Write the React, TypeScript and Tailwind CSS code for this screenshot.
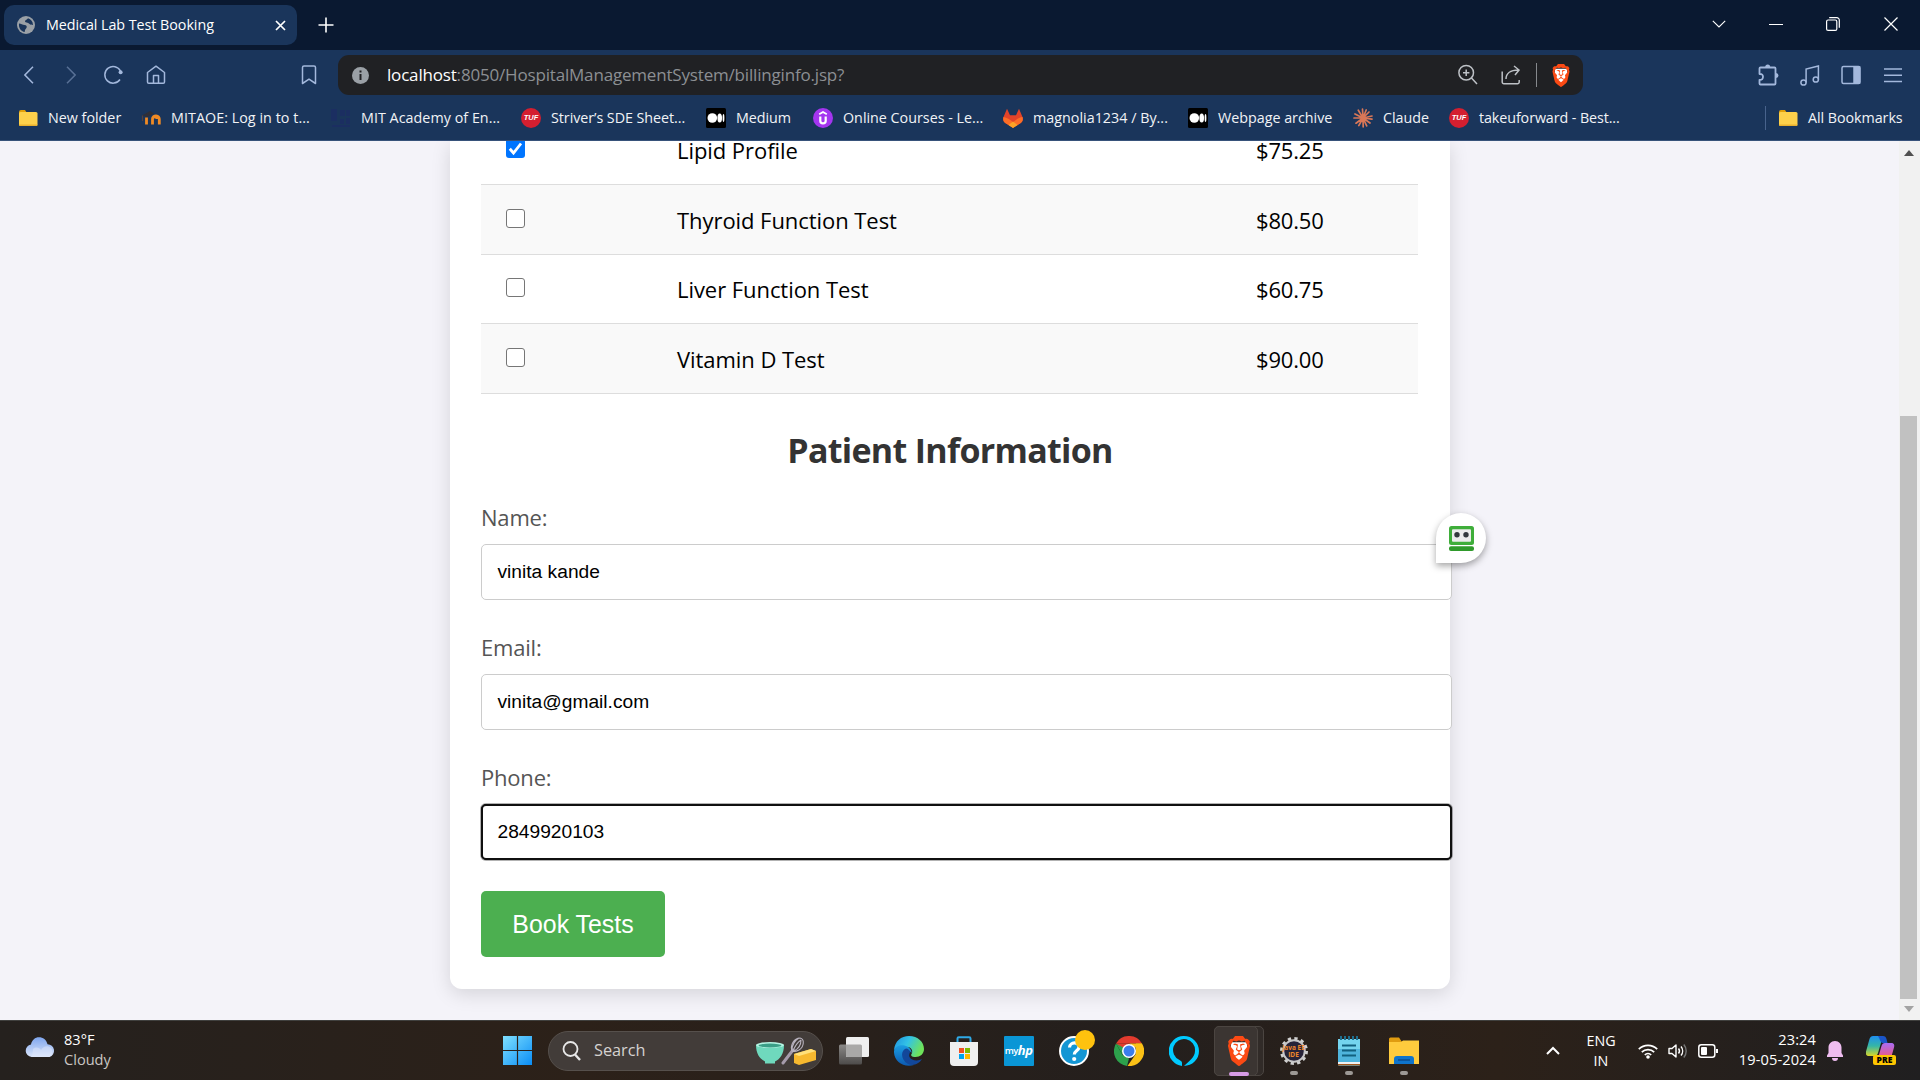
import React from "react";
import { SiBrave } from "react-icons/si";

const UI = "font-['Open_Sans','Noto_Sans',sans-serif]";
const ARIAL = "font-['Liberation_Sans',Arial,sans-serif]";

/* ---------- shared logos ---------- */

function BraveLogo({ className }: { className: string }) {
  return (
    <span className={"relative block " + className}>
      <svg viewBox="0 0 24 24" preserveAspectRatio="none" className="absolute inset-0 size-full">
        <path d="M5 5h14l1 6-3 8-5 3-5-3-3-8z" fill="#fff" />
      </svg>
      <SiBrave className="absolute inset-0 size-full text-[#fb4a14]" preserveAspectRatio="none" />
    </span>
  );
}

function FolderIcon() {
  return (
    <svg viewBox="0 0 20 18" className="h-[18px] w-5">
      <path d="M1 3a2 2 0 0 1 2-2h4l2 3v4H1z" fill="#e3a008" />
      <rect x="1" y="3" width="18.500" height="14" rx="1.500" fill="#fdd04b" />
      <path d="M1 15.500h18.500a1.500 1.500 0 0 1-1.500 1.500h-15.500a1.500 1.500 0 0 1-1.500-1.500z" fill="#e9b02e" />
    </svg>
  );
}

function MoodleIcon() {
  return (
    <svg viewBox="0 0 20 20" className="size-5" fill="none">
      <path d="M5.500 16.500V9.500M11.500 16.500v-5.300a2.300 2.300 0 0 1 4.600-.2 M18.300 16.500v-5a3.300 3.300 0 0 0-6.800-.5v5.500" stroke="#f08a24" strokeWidth="2.800" />
      <path d="M1 7.500 9 3l4 2.500-6.500 3.500z" fill="#2f2f38" />
      <path d="M1.500 7.500v5.500" stroke="#55423c" strokeWidth="1.200" />
    </svg>
  );
}

function MitIcon() {
  return (
    <svg viewBox="0 0 20 20" className="size-5">
      <path d="M0 1h6v12H0zM9 2h5v6H9zM15 2h4v6h-4zM9 11h4v5H9zM15 10h4v6h-4zM1 17h18v2H1z" fill="#1b2b66" opacity=".65" />
    </svg>
  );
}

function TufIcon() {
  return (
    <span className={"flex size-5 items-center justify-center rounded-full bg-[#d41f30] text-[7.5px] font-black italic leading-none text-white " + ARIAL}>
      TUF
    </span>
  );
}

function MediumIcon() {
  return (
    <svg viewBox="0 0 20 20" className="size-5">
      <rect width="20" height="20" rx="1.500" fill="#000" />
      <circle cx="6.300" cy="10" r="4.800" fill="#fff" />
      <ellipse cx="13.700" cy="10" rx="2.300" ry="4.500" fill="#fff" />
      <ellipse cx="17.500" cy="10" rx=".9" ry="4" fill="#fff" />
    </svg>
  );
}

function UdemyIcon() {
  return (
    <svg viewBox="0 0 20 20" className="size-5" fill="none">
      <circle cx="10" cy="10" r="10" fill="#a435f0" />
      <path d="M6.200 6.200 10 4l3.800 2.200" stroke="#fff" strokeWidth="1.800" />
      <path d="M7.300 8.500v4.200a2.700 2.700 0 0 0 5.400 0V8.500" stroke="#fff" strokeWidth="2.200" />
    </svg>
  );
}

function GitlabIcon() {
  return (
    <svg viewBox="0 0 20 20" className="size-5">
      <path d="M4 .8 7 7.300h6L16 .8l3.600 8.400c.7 2.400 0 4.300-1.800 5.700L10 19.800 2.200 14.900C.4 13.500-.3 11.600.4 9.200z" fill="#e24329" />
      <path d="M.5 9c3.500.5 6.500 2.500 9.500 5.200C13 11.500 16 9.500 19.500 9c.8 2.500 0 4.500-1.700 5.900L10 19.800 2.200 14.900C.5 13.500-.3 11.500.5 9z" fill="#fc6d26" />
      <path d="m5.500 16.900 4.500-3.400 4.500 3.400-4.500 3z" fill="#fca326" />
    </svg>
  );
}

function ClaudeIcon() {
  return (
    <svg viewBox="0 0 20 20" className="size-5" stroke="#d97757" strokeWidth="1.700" strokeLinecap="round">
      <path d="M10 10 9.500 1.200M10 10l3.200-8M10 10l6-6M10 10l9-2M10 10l9 1.200M10 10l7 5M10 10l3.700 7.800M10 10l.2 9M10 10l-4.200 7.600M10 10l-7 5.200M10 10H1M10 10 2 6M10 10 5.300 2.200" />
    </svg>
  );
}

/* ---------- browser chrome ---------- */

function TabStrip() {
  return (
    <div className="flex h-[50px] items-center bg-[#0a1931] text-white">
      <div className="ml-1 flex h-10 w-[293px] items-center rounded-[10px] bg-[#1a355b] pl-[13px] pr-[11px]">
        <svg viewBox="0 0 18 18" className="size-[18px]">
          <circle cx="9" cy="9" r="9" fill="#9aa0a6" />
          <path d="M2 7.500c2 .2 3.500 1.500 5.500 1.500 1.800.2 2.500 1 2.200 2.300-.5 1.700-1.700 1.500-2 4.700C4 15.500 1.500 12 2 7.500zM11 2.300c-.5 1.500-2.700 1.200-3 3 0 1.200 1.300 1.200 2.500 1.500 1.700.4 1.700 2.200 5.500 2.200-.1-3.500-2-5.800-5-6.700z" fill="#1a355b" />
        </svg>
        <span className="-mt-px ml-[11px] whitespace-nowrap text-[14.300px] tracking-[-0.04px]">Medical Lab Test Booking</span>
        <svg viewBox="0 0 11 11" className="ml-auto size-[11px]" stroke="#fff" strokeWidth="1.700">
          <path d="M1 1l9 9M10 1l-9 9" />
        </svg>
      </div>
      <svg viewBox="0 0 16 16" className="ml-[21px] size-4" stroke="#fff" strokeWidth="1.600">
        <path d="M8 .5v15M.5 8h15" />
      </svg>
      <div className="ml-auto flex items-center pb-[2px] pr-[22px]">
        <svg viewBox="0 0 14 8" className="h-2 w-[14px]" fill="none" stroke="#fff" strokeWidth="1.100">
          <path d="M.8.800 7 7l6.200-6.200" />
        </svg>
        <div className="ml-[43px] h-px w-[14px] bg-white" />
        <svg viewBox="0 0 14 14" className="ml-[43px] size-[14px]" fill="none" stroke="#fff" strokeWidth="1.200">
          <rect x=".6" y="3" width="10.200" height="10.400" rx="1.500" />
          <path d="M3.200.700h7.500a2.500 2.500 0 0 1 2.600 2.500v7.500" />
        </svg>
        <svg viewBox="0 0 14 14" className="ml-11 size-[14px]" stroke="#fff" strokeWidth="1.200">
          <path d="M.5.500l13 13M13.500.500l-13 13" />
        </svg>
      </div>
    </div>
  );
}

function AddressRow() {
  return (
    <div className="flex h-[50px] items-center text-[#a3b8dc]">
      <svg viewBox="0 0 10 18" className="ml-6 h-[18px] w-[10px]" fill="none" stroke="currentColor" strokeWidth="1.500">
        <path d="M9 .8.900 9 9 17.200" />
      </svg>
      <svg viewBox="0 0 10 18" className="ml-[32px] h-[18px] w-[10px] opacity-45" fill="none" stroke="currentColor" strokeWidth="1.500">
        <path d="M1 .8 9.100 9 1 17.200" />
      </svg>
      <svg viewBox="0 0 20 20" className="ml-[27px] size-5" fill="none" stroke="currentColor" strokeWidth="1.500">
        <path d="M17.500 6A8.300 8.300 0 1 0 17 14.500" />
        <circle cx="17.600" cy="7.300" r="2" fill="currentColor" stroke="none" />
      </svg>
      <svg viewBox="0 0 20 20" className="ml-[23px] size-5" fill="none" stroke="currentColor" strokeWidth="1.500" strokeLinejoin="round">
        <path d="M1.500 7.500 10 1.200l8.500 6.300V17a1.300 1.300 0 0 1-1.300 1.300H2.800A1.300 1.300 0 0 1 1.500 17z" />
        <path d="M7.500 18v-7.500h5V18" />
      </svg>
      <svg viewBox="0 0 16 20" className="ml-[135px] h-5 w-4" fill="none" stroke="currentColor" strokeWidth="1.500" strokeLinejoin="round">
        <path d="M1.500 2.500a1.500 1.500 0 0 1 1.500-1.500h10A1.500 1.500 0 0 1 14.500 2.500v16L8 14.200 1.500 18.500z" />
      </svg>
      <div className="ml-[21px] flex h-10 w-[1245px] items-center rounded-[11px] bg-[#202124] pl-[14px] pr-3 text-[#bdc1c6]">
        <svg viewBox="0 0 17 17" className="size-[17px]">
          <circle cx="8.500" cy="8.500" r="8.500" fill="#9aa0a6" />
          <path d="M8.500 3.500v2M8.500 7v6" stroke="#202124" strokeWidth="2" />
        </svg>
        <span className="-mt-px ml-[18px] whitespace-nowrap text-[17px] tracking-[-0.18px] text-[#8c8f93]">
          <span className="text-white">localhost</span>:8050/HospitalManagementSystem/billinginfo.jsp?
        </span>
        <svg viewBox="0 0 20 22" className="ml-auto h-[22px] w-5" fill="none" stroke="currentColor" strokeWidth="1.500">
          <circle cx="8.200" cy="8.700" r="7.300" />
          <path d="M13.500 14l5.500 6M8.200 5.500v6.400M5 8.700h6.400" />
        </svg>
        <svg viewBox="0 0 20 20" className="ml-[23px] size-5" fill="none" stroke="currentColor" strokeWidth="1.500">
          <path d="M1.200 6.500V17a1.700 1.700 0 0 0 1.700 1.700h13.500A1.700 1.700 0 0 0 18.200 17v-2" />
          <path d="M5 14c0-5 4-9 12.500-9M13 1l5 4-4 5" />
        </svg>
        <div className="ml-[15px] h-6 w-px bg-[#86898d]" />
        <BraveLogo className="ml-[14px] h-[23px] w-5" />
      </div>
      <div className="ml-auto flex items-center pr-[18px]">
        <svg viewBox="0 0 22 22" className="size-[22px]" fill="none" stroke="currentColor" strokeWidth="1.800" strokeLinejoin="round">
          <path d="M3.500 3.500h14a1 1 0 0 1 1 1v15a1 1 0 0 1-1 1h-14a1 1 0 0 1-1-1v-3.700c2.700.2 3.500-1.300 3.500-3s-1-3-3.500-2.800V4.500a1 1 0 0 1 1-1z" />
          <path d="M8.200 3a2.500 2.500 0 0 1 5 0zM19 9a2.500 2.500 0 0 1 0 5z" fill="currentColor" stroke="none" />
        </svg>
        <svg viewBox="0 0 20 22" className="ml-[21px] h-[22px] w-5" fill="none" stroke="currentColor" strokeWidth="1.500">
          <circle cx="3.500" cy="18.500" r="2.600" />
          <circle cx="15.800" cy="15.500" r="2.600" />
          <path d="M6.100 18.500V5L18.400 2v13.500" />
        </svg>
        <svg viewBox="0 0 20 20" className="ml-[21px] size-5" fill="none" stroke="currentColor" strokeWidth="1.500">
          <rect x="1" y="1.500" width="18" height="17" rx="1.500" />
          <path d="M13 2h5.500v16H13z" fill="currentColor" />
        </svg>
        <svg viewBox="0 0 18 16" className="ml-[23px] h-4 w-[18px]" stroke="currentColor" strokeWidth="1.500">
          <path d="M0 2h18M0 8.300h18M0 14.600h18" />
        </svg>
      </div>
    </div>
  );
}

function Bookmark({ icon, label, w, track = "" }: { icon: React.ReactNode; label: string; w: string; track?: string }) {
  return (
    <div className={"flex shrink-0 items-center " + w}>
      {icon}
      <span className={"ml-[10px] whitespace-nowrap text-[14.300px] text-[#f1f3f6] " + track}>{label}</span>
    </div>
  );
}

function BookmarkBar() {
  return (
    <div className="flex h-[41px] items-center border-b border-[#37527a] pb-[5px] pl-[18px]">
      <Bookmark icon={<FolderIcon />} label="New folder" w="w-[123px]" />
      <Bookmark icon={<MoodleIcon />} label="MITAOE: Log in to t..." w="w-[190px]" track="tracking-[0.05px]" />
      <Bookmark icon={<MitIcon />} label="MIT Academy of En..." w="w-[190px]" track="tracking-[0.04px]" />
      <Bookmark icon={<TufIcon />} label="Striver’s SDE Sheet..." w="w-[185px]" track="tracking-[-0.05px]" />
      <Bookmark icon={<MediumIcon />} label="Medium" w="w-[107px]" track="tracking-[-0.05px]" />
      <Bookmark icon={<UdemyIcon />} label="Online Courses - Le..." w="w-[190px]" />
      <Bookmark icon={<GitlabIcon />} label="magnolia1234 / By..." w="w-[185px]" track="tracking-[0.02px]" />
      <Bookmark icon={<MediumIcon />} label="Webpage archive" w="w-[165px]" />
      <Bookmark icon={<ClaudeIcon />} label="Claude" w="w-[96px]" />
      <Bookmark icon={<TufIcon />} label="takeuforward - Best..." w="w-[200px]" track="tracking-[-0.09px]" />
      <div className="ml-auto h-6 w-px bg-[#48638c]" />
      <div className="ml-3">
        <Bookmark icon={<FolderIcon />} label="All Bookmarks" w="w-[142px]" track="tracking-[-0.05px]" />
      </div>
    </div>
  );
}

/* ---------- booking page ---------- */

const TESTS = [
  { name: "Lipid Profile", price: "$75.25", checked: true, row: "h-[70px]", box: "-mt-[2px]" },
  { name: "Thyroid Function Test", price: "$80.50", checked: false, row: "h-[70px] bg-[#f9f9f9]", box: "-mt-[2px]" },
  { name: "Liver Function Test", price: "$60.75", checked: false, row: "h-[69px]", box: "-mt-[4px]" },
  { name: "Vitamin D Test", price: "$90.00", checked: false, row: "h-[70px] bg-[#f9f9f9]", box: "-mt-[2px]" },
];

function CheckBox({ checked }: { checked: boolean }) {
  return checked ? (
    <svg viewBox="0 0 19 19" className="size-[19px]">
      <rect width="19" height="19" rx="3" fill="#0075ff" />
      <path d="M3.800 9.800 7.500 14 15 4.500" fill="none" stroke="#fff" strokeWidth="2.800" />
    </svg>
  ) : (
    <div className="size-[19px] rounded-[3px] border border-[#767676] bg-white" />
  );
}

function Field({ label, value, focused }: { label: string; value: string; focused?: boolean }) {
  return (
    <div className="h-[130px]">
      <div className={"h-[39px] text-[22px] leading-[24px] tracking-[-0.2px] text-[#555] " + UI}>{label}</div>
      <div className={"flex h-[56px] w-[971px] items-center rounded-[5px] border bg-white pl-[15.5px] text-[19.2px] text-black " + ARIAL + (focused ? " border-[#101010] outline-2 -outline-offset-2 outline-[#101010] shadow-[0_0_0_1px_rgba(0,0,0,0.3)]" : " border-[#ccc]")}>
        {value}
      </div>
    </div>
  );
}

function BookingPage() {
  return (
    <div className="relative flex h-[879px] overflow-hidden bg-[#f4f3f9]">
      <div className={"ml-[450px] h-[848px] w-[1000px] rounded-b-[12px] bg-white px-[31px] shadow-[0_5px_19px_rgba(0,0,0,0.13)] " + UI}>
        <div className="-mt-[26px] w-[937px]">
          {TESTS.map((t) => (
            <div key={t.name} className={"flex items-center border-b border-[#ddd] text-[22px] leading-[22px] text-black " + t.row}>
              <div className={"ml-[25px] w-[171px] " + t.box}><CheckBox checked={t.checked} /></div>
              <span className="w-[579px] tracking-[-0.06px]">{t.name}</span>
              <span className="tracking-[-0.18px]">{t.price}</span>
            </div>
          ))}
        </div>
        <h2 className="mt-[31px] h-[50px] text-center text-[34px] font-bold leading-[50px] tracking-[-0.7px] text-[#333]">Patient Information</h2>
        <div className="mt-[30px]">
          <Field label="Name:" value="vinita kande" />
          <Field label="Email:" value="vinita@gmail.com" />
          <Field label="Phone:" value="2849920103" focused />
        </div>
        <div className={"-mt-[4px] flex h-[66px] w-[184px] items-center justify-center rounded-[5px] bg-[#4caf50] pt-px text-[24.900px] text-white " + ARIAL}>
          Book Tests
        </div>
      </div>
      {/* password manager badge floating over the name field */}
      <div className="absolute left-[1436px] top-[372px] flex size-[50px] items-center justify-center rounded-full rounded-bl-none bg-white shadow-[0_3px_7px_rgba(0,0,0,0.35)]">
        <svg viewBox="0 0 25 25" className="size-[25px]">
          <rect width="25" height="19" rx="2.500" fill="#3fae3a" />
          <rect x="3" y="3.200" width="19" height="12.600" rx="1" fill="#ececec" />
          <circle cx="8" cy="8.800" r="2.700" fill="#33383d" />
          <circle cx="17" cy="8.800" r="2.700" fill="#33383d" />
          <rect y="20.200" width="25" height="4.800" rx="2" fill="#2f9a2b" />
        </svg>
      </div>
      <div className="ml-auto flex w-[21px] flex-col items-center bg-[#f1f1f1] pr-[2px]">
        <svg viewBox="0 0 10 6" className="mt-[9px] h-[6px] w-[10px]"><path d="M5 0l5 6H0z" fill="#505050" /></svg>
        <div className="mt-[260px] h-[583px] w-[17px] bg-[#c1c1c1]" />
        <svg viewBox="0 0 10 6" className="mt-[7px] h-[6px] w-[10px]"><path d="M5 6l5-6H0z" fill="#a3a3a3" /></svg>
      </div>
    </div>
  );
}

/* ---------- taskbar ---------- */

function TaskbarApp({ children, dot }: { children: React.ReactNode; dot?: boolean }) {
  return (
    <div className="relative flex h-[60px] w-[55px] shrink-0 items-center justify-center">
      {children}
      {dot && <span className="absolute bottom-[6px] h-1 w-2 rounded-full bg-[#9d9995]" />}
    </div>
  );
}

function Taskbar() {
  return (
    <div className={"flex h-[60px] items-center border-t border-[#40403e] bg-[linear-gradient(90deg,#25211e_0%,#2c2119_30%,#241f1d_60%,#2c2119_78%,#201f20_100%)] text-white " + UI}>
      <div className="flex w-[503px] items-center pl-[25px]">
        <svg viewBox="0 0 31 20" className="mb-2 h-5 w-[31px]">
          <defs><linearGradient id="cl" x1="0" y1="0" x2="0" y2="1"><stop offset="0" stopColor="#7fa6ee" /><stop offset="1" stopColor="#dbe6fb" /></linearGradient></defs>
          <path d="M6.500 20A6.300 6.300 0 0 1 6 7.500C7 3 10 .3 14 .3s7.500 2.500 8.500 7a6.500 6.500 0 0 1 2 12.700z" fill="url(#cl)" />
          <path d="M8 12c3-3 7-1 8 1 2-4 7-5 10-2a6 6 0 0 1-1.500 9H7z" fill="#e4ecfc" opacity=".45" />
        </svg>
        <div className="-mt-[4px] ml-2 text-[14.600px] leading-5">
          <div>83°F</div>
          <div className="text-[#c9c6c3]">Cloudy</div>
        </div>
      </div>
      <svg viewBox="0 0 29 29" className="size-[29px]">
        <defs><linearGradient id="win" x1="0" y1="0" x2="1" y2="1"><stop offset="0" stopColor="#7fe0ff" /><stop offset="1" stopColor="#0a8df5" /></linearGradient></defs>
        <path d="M0 0h13.900v13.900H0zM15.100 0H29v13.900H15.100zM0 15.100h13.900V29H0zM15.100 15.100H29V29H15.100z" fill="url(#win)" />
      </svg>
      <div className="ml-4 flex h-10 w-[275px] items-center rounded-full border border-[#56504c] bg-[#423c39] pl-[13px] pr-[5px]">
        <svg viewBox="0 0 19 20" className="h-5 w-[19px]" fill="none" stroke="#e8e8e8" strokeWidth="1.800">
          <circle cx="8.500" cy="8" r="7" /><path d="M13 13.500l5 5.500" strokeWidth="2.400" />
        </svg>
        <span className="ml-[13px] text-[16.300px] text-[#d5d2d0]">Search</span>
        <svg viewBox="0 0 62 28" className="ml-auto h-7 w-[62px]" fill="none">
          <path d="M1 8c0 9 4 14 9 16.500v2h10v-2C25 22 29 17 29 8z" fill="#6fd9bd" />
          <ellipse cx="15" cy="8" rx="14" ry="3" fill="#b5f3e2" />
          <ellipse cx="15" cy="8.500" rx="11.500" ry="1.900" fill="#3a9f87" />
          <path d="M28 26 38 13" stroke="#a59bab" strokeWidth="3" strokeLinecap="round" />
          <path d="M37 14c-2-6 2-13 8-13 5 1 4 9-1 12-2 1-5 2-7 1zM38 14c2-5 5-9 8-11M37 13c0-5 3-10 7-12M39 14c4-2 7-6 7-11" stroke="#b9b3bf" strokeWidth="1.100" />
          <path d="M39 17 56 12l5 2v9l-17 5-5-2z" fill="#f7b92f" />
          <path d="M39 17 56 12l5 2-17 5z" fill="#ffe07a" />
        </svg>
      </div>

      <div className="ml-[3px] flex">
        <TaskbarApp>
          <svg viewBox="0 0 30 28" className="h-7 w-[30px]">
            <defs><linearGradient id="tv" x1="0" y1="0" x2="0" y2="1"><stop offset="0" stopColor="#8b8987" /><stop offset="1" stopColor="#4d4b4a" /></linearGradient></defs>
            <rect x="0" y="7.500" width="23" height="20" rx="1.500" fill="url(#tv)" />
            <rect x="7" y="0" width="23" height="20" rx="1.500" fill="#efefef" />
            <path d="M7 7.500h14.500A1.500 1.500 0 0 1 23 9v11H8.500A1.500 1.500 0 0 1 7 18.500z" fill="#a9a8a7" />
          </svg>
        </TaskbarApp>
        <TaskbarApp>
          <svg viewBox="0 0 30 30" className="size-[30px]">
            <defs>
              <linearGradient id="e1" x1="0" y1="0" x2="1" y2=".4"><stop offset="0" stopColor="#1d8fe0" /><stop offset=".5" stopColor="#33c3e6" /><stop offset="1" stopColor="#6ee35a" /></linearGradient>
              <linearGradient id="e2" x1="0" y1="0" x2="0" y2="1"><stop offset="0" stopColor="#1b9de2" /><stop offset="1" stopColor="#0c59b0" /></linearGradient>
            </defs>
            <path d="M0 14C1 5 7 0 15 0c9 0 15 6 15 13 0 5-4 8-8.500 8-4 0-5-1.500-4-3 1.500-2 1-6.500-4-7C7 10.500 2 11.500 0 14z" fill="url(#e1)" />
            <path d="M0 15C1 10 6 8.500 10.500 9.500 15 10.500 18 14 17.500 17 16 14.500 12 14 11 18c-1 5 4 10 9 11C9 32-.5 25 0 15z" fill="url(#e2)" />
            <path d="M12 12.500C6 15 7 24 14 28c5 2.500 11 0 14-5-4 2.500-11 1.500-12.500-2-1-2.500.5-3.500.5-5s-2-3.500-4-3.500z" fill="#12479a" />
          </svg>
        </TaskbarApp>
        <TaskbarApp>
          <svg viewBox="0 0 30 30" className="size-[30px]">
            <path d="M8.500 7V2.500A1.300 1.300 0 0 1 9.800 1.200h10.400a1.300 1.300 0 0 1 1.300 1.300V7" fill="none" stroke="#2fa9e6" strokeWidth="2" />
            <path d="M1 6h28v20a4 4 0 0 1-4 4H5a4 4 0 0 1-4-4z" fill="#efefef" />
            <path d="M10 12h5v5h-5z" fill="#f25022" /><path d="M16 12h5v5h-5z" fill="#7fba00" />
            <path d="M10 18h5v5h-5z" fill="#00a4ef" /><path d="M16 18h5v5h-5z" fill="#ffb900" />
          </svg>
        </TaskbarApp>
        <TaskbarApp>
          <div className="flex size-[30px] items-center justify-center rounded-[1px] bg-[#0a96d6] leading-none tracking-[-0.5px]">
            <span className="text-[9.5px] font-semibold">my</span><span className="text-[13px] font-bold italic">hp</span>
          </div>
        </TaskbarApp>
        <TaskbarApp>
          <svg viewBox="0 0 36 36" className="mb-[6px] ml-[6px] size-9">
            <circle cx="15" cy="21" r="14" fill="#1496d4" stroke="#fff" strokeWidth="2" />
            <path d="M10.500 17.500c.2-6 9.800-6 9.500-.3-.2 3.500-4.700 3.800-4.700 7.300" fill="none" stroke="#fff" strokeWidth="3.200" />
            <circle cx="15.200" cy="29" r="2.100" fill="#fff" />
            <circle cx="26" cy="10" r="10" fill="#ffc20e" />
          </svg>
        </TaskbarApp>
        <TaskbarApp>
          <svg viewBox="0 0 30 30" className="size-[30px]">
            <path d="M2 7.500A15 15 0 0 1 28 7.500H15z" fill="#e33b2e" />
            <path d="M2 7.500 8.500 19l6.500 3.500L13 30A15 15 0 0 1 2 7.500z" fill="#2da14c" />
            <path d="M28 7.500A15 15 0 0 1 13.500 30l8-11.500L22 7.500z" fill="#fbc116" />
            <path d="M15 7.500h13L22 12z" fill="#fbc116" /><path d="M2 7.500h13v4l-6 3z" fill="#e33b2e" />
            <path d="M2 7.500 8.500 18.800 10 12z" fill="#2da14c" />
            <circle cx="15" cy="15" r="7" fill="#fff" /><circle cx="15" cy="15" r="5.500" fill="#3b7ded" />
          </svg>
        </TaskbarApp>
        <TaskbarApp>
          <svg viewBox="0 0 30 30" className="size-[30px]">
            <path fillRule="evenodd" d="M15 0a15 15 0 0 0-2 29.900v-3C13 25.500 12 25 10.500 24A11 11 0 1 1 26 15c0 6-6 10.500-11 15A15 15 0 0 0 15 0z" fill="#00caff" />
          </svg>
        </TaskbarApp>
        <TaskbarApp>
          <span className="absolute left-[3px] top-[5px] h-[50px] w-[50px] rounded-[5px] border border-[#4b4541] bg-[#312b28]" />
          <span className="absolute left-[3px] top-[5px] h-[50px] w-[44px] rounded-[5px] border border-[#4b4541] bg-[#3b3532]" />
          <BraveLogo className="ml-px h-[30px] w-[26px]" />
          <span className="absolute bottom-[5px] left-[18px] h-1 w-5 rounded-full bg-[#d79be5]" />
        </TaskbarApp>
        <TaskbarApp dot>
          <div className="relative flex size-7 items-center justify-center">
            <svg viewBox="0 0 28 28" className="absolute inset-0 size-7">
              <circle cx="14" cy="14" r="12.500" fill="none" stroke="#d0d0d0" strokeWidth="3" strokeDasharray="3.270 3.270" />
              <circle cx="14" cy="14" r="10.800" fill="#272338" stroke="#c8c8c8" strokeWidth="2" />
            </svg>
            <div className="relative flex flex-col items-center text-[6.500px] font-bold leading-[7px] text-[#f0862a]"><div className="whitespace-nowrap">Java EE</div><div>IDE</div></div>
          </div>
        </TaskbarApp>
        <TaskbarApp dot>
          <svg viewBox="0 0 24 30" className="h-[30px] w-6">
            <rect x="1" y="3" width="22" height="27" rx="1.500" fill="#4fb4dc" />
            <path d="M1 3h22v10H1z" fill="#74d4ee" /><path d="M1 26h22v2H1z" fill="#f0f0f0" /><path d="M1 28h22v1.500H1z" fill="#a3571c" />
            <path d="M4 0v4M8 0v4M12 0v4M16 0v4M20 0v4" stroke="#1e6f8f" strokeWidth="2" />
            <path d="M5 9.500h14M5 14.500h14M5 19.500h14" stroke="#12607f" strokeWidth="1.800" />
          </svg>
        </TaskbarApp>
        <TaskbarApp dot>
          <svg viewBox="0 0 30 28" className="h-7 w-[30px]">
            <path d="M0 2a1.500 1.500 0 0 1 1.500-1.500H10L13 5H0z" fill="#e09c10" />
            <path d="M0 5h12l2-1.500h16V27H0z" fill="#ffcb3d" />
            <path d="M5 27v-5a3 3 0 0 1 3-3h14a3 3 0 0 1 3 3v5z" fill="#0f74cc" />
            <path d="M9 23h12" stroke="#0b4a8c" strokeWidth="1.400" />
          </svg>
        </TaskbarApp>
      </div>

      <div className="ml-auto flex items-center pr-[25px] text-[14.600px] leading-5">
        <svg viewBox="0 0 14 9" className="h-[9px] w-[14px]" fill="none" stroke="#fff" strokeWidth="2"><path d="M1 8l6-6 6 6" /></svg>
        <div className="mt-px ml-[26px] flex w-[30px] flex-col items-center text-[14.300px]"><div>ENG</div><div>IN</div></div>
        <svg viewBox="0 0 20 16" className="ml-[22px] h-4 w-5" fill="none" stroke="#fff" strokeWidth="1.700">
          <path d="M.8 6.200a13 13 0 0 1 18.400 0M3.800 9.200a8.800 8.800 0 0 1 12.400 0M6.800 12a4.600 4.600 0 0 1 6.400 0" /><circle cx="10" cy="14" r="1.800" fill="#fff" stroke="none" />
        </svg>
        <svg viewBox="0 0 20 16" className="ml-[10px] h-4 w-5" fill="none" stroke="#fff" strokeWidth="1.400">
          <path d="M1 5.500h3L8 2v12l-4-3.500H1z" strokeLinejoin="round" /><path d="M10.500 5.500a4 4 0 0 1 0 5M13 3.500a7 7 0 0 1 0 9" /><path d="M15.800 1.500a10 10 0 0 1 0 13" stroke="#777" />
        </svg>
        <svg viewBox="0 0 20 14" className="ml-[10px] h-[14px] w-5" fill="none" stroke="#fff" strokeWidth="1.500">
          <rect x=".8" y=".8" width="16" height="12.400" rx="2.500" /><path d="M19 5v4" strokeWidth="2" /><rect x="3" y="3" width="6" height="8" rx="1" fill="#fff" stroke="none" />
        </svg>
        <div className="-mt-[4px] ml-[20px] w-[78px] whitespace-nowrap text-right tracking-[0.1px]"><div>23:24</div><div>19-05-2024</div></div>
        <svg viewBox="0 0 16 20" className="ml-[11px] h-5 w-4" fill="#efbdf0">
          <path d="M8 0c4 0 6.500 3 6.500 6.500V12L16 14.500V16H0v-1.500L1.500 12V6.500C1.500 3 4 0 8 0zM5 17h6a3 3 0 0 1-6 0z" />
        </svg>
        <div className="relative ml-[23px] h-[29px] w-[29px]">
          <svg viewBox="0 0 29 29" className="size-[29px]">
            <defs>
              <linearGradient id="c1" x1="0" y1="0" x2="0" y2="1"><stop offset="0" stopColor="#1e8ff0" /><stop offset=".5" stopColor="#35b6a6" /><stop offset="1" stopColor="#d8d629" /></linearGradient>
              <linearGradient id="c2" x1="0" y1="0" x2="0" y2="1"><stop offset="0" stopColor="#a86cf5" /><stop offset="1" stopColor="#f2587a" /></linearGradient>
            </defs>
            <path d="M7 0h10l-5 17c-.6 2-1.700 3-3.500 3H3c-3 0-3.500-2-3-4.500L3.500 3C4 1 5.500 0 7 0z" fill="url(#c1)" />
            <path d="M12 0h5c2 0 3 1 3.500 3l1 4h-5C14.500 7 14 3 12 0z" fill="#1a55c8" />
            <path d="M19 7h6c3 0 3.800 2 3 4.500L25 22H12l3.500-12c.6-2 1.700-3 3.500-3z" fill="url(#c2)" />
          </svg>
          <span className="absolute -right-[1px] bottom-0 flex h-[10px] w-[23px] items-center justify-center rounded-[2px] bg-[#fdc500] text-[8.500px] font-extrabold leading-none text-black">PRE</span>
        </div>
      </div>
    </div>
  );
}

export default function Desktop() {
  return (
    <div className={"relative flex h-[1080px] w-[1920px] flex-col overflow-hidden " + UI}>
      <TabStrip />
      <div className="bg-[#1a355b]">
        <AddressRow />
        <BookmarkBar />
      </div>
      <BookingPage />
      <Taskbar />
    </div>
  );
}
